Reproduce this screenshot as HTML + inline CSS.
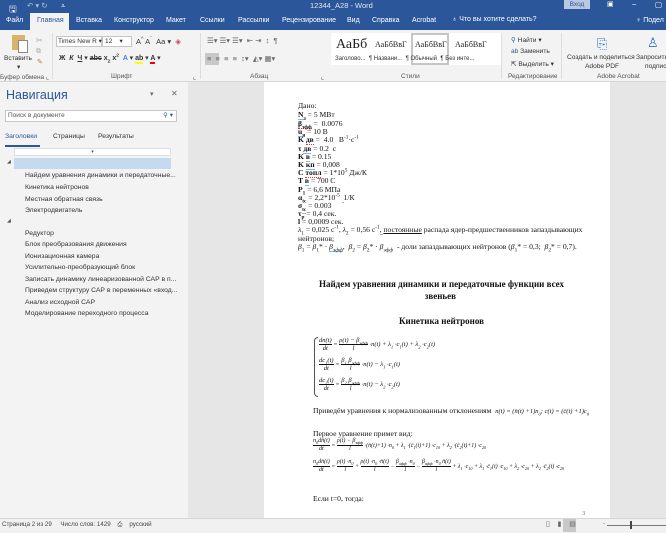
<!DOCTYPE html>
<html><head><meta charset="utf-8"><style>
*{margin:0;padding:0;box-sizing:border-box}
body{width:666px;height:533px;overflow:hidden;position:relative;font-family:"Liberation Sans","DejaVu Sans",sans-serif;background:#e6e6e6;font-size:8px;color:#444}
sub,sup{line-height:0;font-size:70%}
.a{position:absolute;white-space:nowrap}
.t{position:absolute;white-space:nowrap;font-family:"Liberation Serif",serif;font-size:7.6px;color:#111;line-height:9px}
.u{border-bottom:1px solid #8ab4f0}
.r{border-bottom:1px dotted #e03030}
.tb{color:#fff;font-size:7.5px}
.rb{font-size:6.6px;color:#333}
.gl{font-size:6.5px;color:#555}
.nav{font-size:6.8px;color:#333}
.f{display:inline-block;text-align:center;vertical-align:middle}
.f span{border-top:1px solid #111;display:block}
</style></head><body>
<!-- title bar -->
<div class="a" style="left:0;top:0;width:666px;height:30px;background:#2b579a"></div>
<div class="a tb" style="left:9px;top:2px;font-size:9px">🖫</div>
<div class="a tb" style="left:27px;top:1px;opacity:.6">↶ ▾ ↻</div>
<div class="a tb" style="left:61px;top:1px">⩡</div>
<div class="a tb" style="left:310px;top:1px;opacity:.85">12344_A28 - Word</div>
<div class="a" style="left:564px;top:0;width:26px;height:9px;background:#b8c8e2;color:#2b579a;font-size:6.5px;text-align:center;line-height:9px">Вход</div>
<div class="a tb" style="left:607px;top:0;font-size:7px">▣</div>
<div class="a tb" style="left:632px;top:0">−</div>
<div class="a tb" style="left:655px;top:0">▢</div>
<!-- tabs -->
<div class="a" style="left:30px;top:13px;width:39px;height:18px;background:#f3f3f3"></div>
<div class="a tb" style="left:6px;top:17px;font-size:7px">Файл</div>
<div class="a" style="left:37px;top:17px;font-size:7px;color:#2b579a">Главная</div>
<div class="a tb" style="left:76px;top:17px;font-size:7px">Вставка</div>
<div class="a tb" style="left:114px;top:17px;font-size:7px">Конструктор</div>
<div class="a tb" style="left:166px;top:17px;font-size:7px">Макет</div>
<div class="a tb" style="left:200px;top:17px;font-size:7px">Ссылки</div>
<div class="a tb" style="left:238px;top:17px;font-size:7px">Рассылки</div>
<div class="a tb" style="left:282px;top:17px;font-size:7px">Рецензирование</div>
<div class="a tb" style="left:347px;top:17px;font-size:7px">Вид</div>
<div class="a tb" style="left:372px;top:17px;font-size:7px">Справка</div>
<div class="a tb" style="left:412px;top:17px;font-size:7px">Acrobat</div>
<div class="a tb" style="left:452px;top:16px;font-size:7px">♁ Что вы хотите сделать?</div>
<div class="a tb" style="left:636px;top:17px;font-size:7px">♀ Подел</div>
<!-- ribbon -->
<div class="a" style="left:0;top:30px;width:666px;height:52px;background:#f3f3f3;border-bottom:1px solid #d6d6d6"></div>
<div class="a" style="left:12px;top:35px;width:13px;height:15px;background:#d9b36a"></div>
<div class="a" style="left:18px;top:40px;width:10px;height:13px;background:#fff;border:1px solid #888"></div>
<div class="a rb" style="left:4px;top:55px">Вставить</div>
<div class="a rb" style="left:17px;top:63px">▾</div>
<div class="a" style="left:36px;top:36px;color:#aaa;font-size:8px">✂</div>
<div class="a" style="left:36px;top:48px;color:#aaa;font-size:7px">⧉</div>
<div class="a" style="left:37px;top:58px;color:#b8860b;font-size:7px">✎</div>
<div class="a gl" style="left:0;top:73px">Буфер обмена ⌞</div>
<div class="a" style="left:52px;top:33px;width:1px;height:46px;background:#ddd"></div>
<div class="a" style="left:56px;top:36px;width:46px;height:11px;background:#fff;border:1px solid #c6c6c6;font-size:6.5px;padding-left:1px;line-height:9px;color:#333">Times New R ▾</div>
<div class="a" style="left:102px;top:36px;width:30px;height:11px;background:#fff;border:1px solid #c6c6c6;font-size:6.5px;padding-left:2px;line-height:9px;color:#333">12 &nbsp;&nbsp;&nbsp;▾</div>
<div class="a rb" style="left:136px;top:37px;font-size:7.5px">A<sup>^</sup> A<sup>ˇ</sup> &nbsp;Aa ▾ &nbsp;<span style="color:#d04060">◈</span></div>
<div class="a rb" style="left:59px;top:54px;font-weight:bold;font-size:7px">Ж &nbsp;<i>К</i> &nbsp;<u>Ч</u> ▾ <s>abc</s> x<sub>2</sub> x<sup>2</sup> &nbsp;<span style="color:#4a7ecf">A</span> ▾ <span style="border-bottom:2px solid #ff0">ab</span> ▾ <span style="border-bottom:2px solid #e00">A</span> ▾</div>
<div class="a gl" style="left:111px;top:73px">Шрифт</div>
<div class="a gl" style="left:193px;top:73px">⌞</div>
<div class="a" style="left:200px;top:33px;width:1px;height:46px;background:#ddd"></div>
<div class="a rb" style="left:207px;top:36px;color:#666;font-size:7.5px">☰▾ ☰▾ ☰▾ &nbsp;⇤ ⇥ &nbsp;↕ &nbsp;¶</div>
<div class="a" style="left:205px;top:53px;width:14px;height:12px;background:#c8c8c8"></div>
<div class="a rb" style="left:207px;top:54px;color:#666;font-size:7.5px">≡ &nbsp;≡ &nbsp;≡ &nbsp;≡ &nbsp;↕▾ &nbsp;◭▾ ▦▾</div>
<div class="a gl" style="left:250px;top:73px">Абзац</div>
<div class="a gl" style="left:321px;top:73px">⌞</div>
<div class="a" style="left:331px;top:33px;width:170px;height:32px;background:#fff"></div>
<div class="a" style="left:411px;top:33px;width:38px;height:32px;border:2px solid #c6c6c6"></div>
<div class="a" style="left:336px;top:37px;font-family:'Liberation Serif',serif;font-size:14px;color:#222">АаБб</div>
<div class="a" style="left:375px;top:40px;font-family:'Liberation Serif',serif;font-size:8px;color:#222">АаБбВвГ</div>
<div class="a" style="left:415px;top:40px;font-family:'Liberation Serif',serif;font-size:8px;color:#222">АаБбВвГ</div>
<div class="a" style="left:455px;top:40px;font-family:'Liberation Serif',serif;font-size:8px;color:#222">АаБбВвГ</div>
<div class="a rb" style="left:335px;top:56px;font-size:6px">Заголово... &nbsp;¶ Названи... &nbsp;¶ Обычный &nbsp;¶ Без инте...</div>
<div class="a gl" style="left:401px;top:73px">Стили</div>
<div class="a" style="left:501px;top:33px;width:1px;height:46px;background:#ddd"></div>
<div class="a rb" style="left:511px;top:36px"><span style="color:#2b579a">⚲</span> Найти ▾</div>
<div class="a rb" style="left:511px;top:48px"><span style="color:#2b579a">ab</span> Заменить</div>
<div class="a rb" style="left:511px;top:60px">⇱ Выделить ▾</div>
<div class="a gl" style="left:508px;top:73px">Редактирование</div>
<div class="a" style="left:561px;top:33px;width:1px;height:46px;background:#ddd"></div>
<div class="a" style="left:597px;top:36px;color:#2b72c6;font-size:13px">⎘</div>
<div class="a rb" style="left:567px;top:54px">Создать и поделиться</div>
<div class="a rb" style="left:585px;top:63px">Adobe PDF</div>
<div class="a" style="left:647px;top:35px;color:#2b72c6;font-size:13px">♙</div>
<div class="a rb" style="left:636px;top:54px">Запросить</div>
<div class="a rb" style="left:645px;top:63px">подписи</div>
<div class="a gl" style="left:597px;top:73px">Adobe Acrobat</div>
<!-- nav pane -->
<div class="a" style="left:0;top:82px;width:188px;height:436px;background:#f3f3f3"></div>
<div class="a" style="left:6px;top:88px;font-size:12.5px;color:#2b579a">Навигация</div>
<div class="a" style="left:150px;top:90px;font-size:7px;color:#666">▾</div>
<div class="a" style="left:171px;top:89px;font-size:8px;color:#666">✕</div>
<div class="a" style="left:5px;top:110px;width:172px;height:12px;background:#fff;border:1px solid #c6c6c6;font-size:6.5px;color:#555;padding-left:2px;line-height:10px">Поиск в документе<span style="position:absolute;right:3px;color:#2b579a">⚲ ▾</span></div>
<div class="a nav" style="left:5px;top:133px;color:#2b579a">Заголовки</div>
<div class="a" style="left:5px;top:145px;width:35px;height:2px;background:#2b579a"></div>
<div class="a nav" style="left:53px;top:133px">Страницы</div>
<div class="a nav" style="left:98px;top:133px">Результаты</div>
<div class="a" style="left:14px;top:148px;width:157px;height:8px;background:#fff;border:1px solid #ddd;text-align:center;font-size:5px;line-height:6px;color:#555">▾</div>
<div class="a" style="left:14px;top:158px;width:157px;height:11px;background:#c5d9f1"></div>
<div class="a" style="left:7px;top:159px;font-size:5px;color:#555">◢</div>
<div class="a" style="left:7px;top:218px;font-size:5px;color:#555">◢</div>
<div class="a nav" style="left:25px;top:172px">Найдем уравнения динамики и передаточные...</div>
<div class="a nav" style="left:25px;top:184px">Кинетика нейтронов</div>
<div class="a nav" style="left:25px;top:196px">Местная обратная связь</div>
<div class="a nav" style="left:25px;top:207px">Электродвигатель</div>
<div class="a nav" style="left:25px;top:230px">Редуктор</div>
<div class="a nav" style="left:25px;top:241px">Блок преобразования движения</div>
<div class="a nav" style="left:25px;top:253px">Ионизационная камера</div>
<div class="a nav" style="left:25px;top:264px">Усилительно-преобразующий блок</div>
<div class="a nav" style="left:25px;top:276px">Записать динамику линеаризованной САР в п...</div>
<div class="a nav" style="left:25px;top:287px">Приведем структуру САР в переменных «вход...</div>
<div class="a nav" style="left:25px;top:299px">Анализ исходной САР</div>
<div class="a nav" style="left:25px;top:310px">Моделирование переходного процесса</div>
<!-- page -->
<div class="a" style="left:264px;top:82px;width:346px;height:436px;background:#fff"></div>
<div class="t" style="left:298px;top:101px">Дано:</div>
<div class="t" style="left:298px;top:110px"><b class="u">N<sub>э</sub></b> = 5 МВт</div>
<div class="t" style="left:298px;top:119px"><b class="r">β<sub>эфф</sub></b> =&nbsp; 0.0076</div>
<div class="t" style="left:298px;top:127px"><b class="u">u<sub>я</sub></b> = 10 В</div>
<div class="t" style="left:298px;top:135px"><b>K <span class="r">дв</span></b> =&nbsp; 4.0 &nbsp; В<sup>-1</sup>·с<sup>-1</sup></div>
<div class="t" style="left:298px;top:144px"><b>τ <span class="u">дв</span></b> = 0.2 &nbsp;с</div>
<div class="t" style="left:298px;top:152px"><b>K <span class="u">в</span></b> = 0.15</div>
<div class="t" style="left:298px;top:160px"><b>K <span class="u">кп</span></b> = 0,008</div>
<div class="t" style="left:298px;top:168px"><b>C <span class="r">топл</span></b> = 1*10<sup>5</sup> Дж/К</div>
<div class="t" style="left:298px;top:176px"><b>T <span class="u">в</span></b> = 700 С</div>
<div class="t" style="left:298px;top:185px"><b>P<sub>1</sub></b> = 6,6 МПа</div>
<div class="t" style="left:298px;top:193px"><b>α<sub>tc</sub></b> = 2,2*10<sup>-5</sup> <span class="u">&nbsp;</span>1/К</div>
<div class="t" style="left:298px;top:201px"><b>σ<sub class="u">tc</sub></b> = 0.003</div>
<div class="t" style="left:298px;top:209px"><b>τ<sub>р</sub></b> = 0,4 сек.</div>
<div class="t" style="left:298px;top:217px"><b>l</b> = 0,0009 сек.</div>
<div class="t" style="left:298px;top:225px"><i>λ</i><sub>1</sub> = 0,025 с<sup>-1</sup>, <i>λ</i><sub>2</sub> = 0,56 с<sup>-1</sup><span class="u">, </span> <u>постоянные</u> распада ядер-предшественников запаздывающих</div>
<div class="t" style="left:298px;top:234px">нейтронов;</div>
<div class="t" style="left:298px;top:242px"><i>β</i><sub>1</sub> = <i>β</i><sub>1</sub>* · <i class="u">β<sub>эфф</sub></i>, &nbsp;<i>β</i><sub>2</sub> = <i>β</i><sub>2</sub>* · <i>β<sub>эфф</sub></i> &nbsp;- доли запаздывающих нейтронов (<i>β</i><sub>1</sub>* = 0,3; &nbsp;<i>β</i><sub>2</sub>* = 0,7).</div>
<div class="t" style="left:264px;width:346px;text-align:center;top:280px;font-size:9px;font-weight:bold">&nbsp;&nbsp;&nbsp;&nbsp;Найдем уравнения динамики и передаточные функции всех</div>
<div class="t" style="left:264px;width:346px;text-align:center;top:292px;font-size:9px;font-weight:bold">&nbsp;&nbsp;&nbsp;звеньев</div>
<div class="t" style="left:264px;width:346px;text-align:center;top:317px;font-size:9px;font-weight:bold">&nbsp;&nbsp;&nbsp;&nbsp;Кинетика нейтронов</div>
<!-- system -->
<div class="a" style="left:314px;top:337px;width:4px;height:60px;border:1px solid #555;border-right:none;border-radius:4px 0 0 4px"></div>
<div class="t" style="left:319px;top:337px;font-style:italic;font-size:6.5px;line-height:7px">
<div class="f">dn(t)<span>dt</span></div> = <div class="f">ρ(t) − β<sub>эфф</sub><span>l</span></div> ·n(t) + λ<sub>1</sub> ·c<sub>1</sub>(t) + λ<sub>2</sub> ·c<sub>2</sub>(t)</div>
<div class="t" style="left:319px;top:357px;font-style:italic;font-size:6.5px;line-height:7px">
<div class="f">dc<sub>1</sub>(t)<span>dt</span></div> = <div class="f">β<sub>1</sub> β<sub>эфф</sub><span>l</span></div> ·n(t) − λ<sub>1</sub> ·c<sub>1</sub>(t)</div>
<div class="t" style="left:319px;top:377px;font-style:italic;font-size:6.5px;line-height:7px">
<div class="f">dc<sub>2</sub>(t)<span>dt</span></div> = <div class="f">β<sub>2</sub> β<sub>эфф</sub><span>l</span></div> ·n(t) − λ<sub>2</sub> ·c<sub>2</sub>(t)</div>
<div class="t" style="left:313px;top:406px">Приведём уравнения к нормализованным отклонениям &nbsp;<i style="font-size:6.5px">n(t) = (n̄(t) +1)n<sub>0</sub>; c(t) = (c̄(t) +1)c<sub>0</sub></i></div>
<div class="t" style="left:313px;top:429px">Первое уравнение примет вид:</div>
<div class="t" style="left:313px;top:438px;font-style:italic;font-size:6px;line-height:7px">
<div class="f">n<sub>0</sub>dn̄(t)<span>dt</span></div> = <div class="f">ρ(t) − β<sub>эфф</sub><span>l</span></div> ·(n̄(t)+1) ·n<sub>0</sub> + λ<sub>1</sub> ·(c̄<sub>1</sub>(t)+1) ·c<sub>10</sub> + λ<sub>2</sub> ·(c̄<sub>2</sub>(t)+1) ·c<sub>20</sub></div>
<div class="t" style="left:313px;top:459px;font-style:italic;font-size:6px;line-height:7px">
<div class="f">n<sub>0</sub>dn̄(t)<span>dt</span></div> = <div class="f">ρ(t) ·n<sub>0</sub><span>l</span></div> + <div class="f">ρ(t) ·n<sub>0</sub> ·n̄(t)<span>l</span></div> − <div class="f">β<sub>эфф</sub> ·n<sub>0</sub><span>l</span></div> − <div class="f">β<sub>эфф</sub> ·n<sub>0</sub> n̄(t)<span>l</span></div> + λ<sub>1</sub> ·c<sub>10</sub> + λ<sub>1</sub> ·c̄<sub>1</sub>(t) ·c<sub>10</sub> + λ<sub>2</sub> ·c<sub>20</sub> + λ<sub>2</sub> ·c̄<sub>2</sub>(t) ·c<sub>20</sub></div>
<div class="t" style="left:313px;top:494px">Если t=0, тогда:</div>
<div class="t" style="left:582px;top:509px;font-size:6.5px;color:#777">3</div>
<!-- status bar -->
<div class="a" style="left:0;top:518px;width:666px;height:15px;background:#f1f1f1;border-top:1px solid #d6d6d6"></div>
<div class="a" style="left:2px;top:521px;font-size:6.2px;color:#444">Страница 2 из 29 &nbsp;&nbsp;&nbsp; Число слов: 1429 &nbsp;&nbsp; ⎙ &nbsp;&nbsp; русский</div>
<div class="a" style="left:563px;top:519px;width:13px;height:13px;background:#c8c8c8"></div>
<div class="a" style="left:546px;top:520px;font-size:7px;color:#666">▯ &nbsp;&nbsp;&nbsp;▮ &nbsp;&nbsp;&nbsp;▤</div>
<div class="a" style="left:607px;top:525px;width:59px;height:1px;background:#777"></div>
<div class="a" style="left:603px;top:521px;font-size:6px;color:#555">-</div>
<div class="a" style="left:630px;top:521px;width:2px;height:8px;background:#444"></div>
</body></html>
